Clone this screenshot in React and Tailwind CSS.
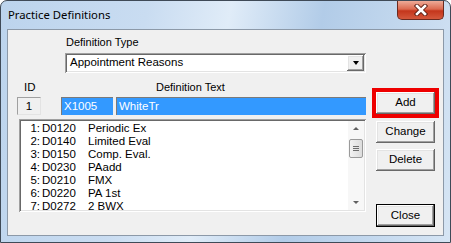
const ROWS = [
  ["1:", "D0120", "Periodic Ex"],
  ["2:", "D0140", "Limited Eval"],
  ["3:", "D0150", "Comp. Eval."],
  ["4:", "D0230", "PAadd"],
  ["5:", "D0210", "FMX"],
  ["6:", "D0220", "PA 1st"],
  ["7:", "D0272", "2 BWX"],
];

const sunken =
  "shadow-[inset_1px_1px_#a0a0a0,inset_-1px_-1px_#ffffff,inset_2px_2px_#696969,inset_-2px_-2px_#e3e3e3]";
const raised =
  "shadow-[inset_-1px_-1px_#696969,inset_1px_1px_#ffffff,inset_-2px_-2px_#a0a0a0,inset_2px_2px_#e3e3e3]";

function Btn({ children, className = "" }) {
  return (
    <div
      className={`flex w-[59px] items-center justify-center bg-[#f0f0f0] text-[11.5px] text-black ${raised} ${className}`}
    >
      {children}
    </div>
  );
}

function CloseX() {
  return (
    <svg width="16" height="12" viewBox="0 0 16 12">
      <path d="M4 2 L12 10 M12 2 L4 10" stroke="#5a1d12" strokeWidth="4.4" strokeLinecap="square" />
      <path d="M4 2 L12 10 M12 2 L4 10" stroke="#ffffff" strokeWidth="2.6" strokeLinecap="square" />
    </svg>
  );
}

export default function App() {
  return (
    <div
      className="flex h-[243px] w-[451px] flex-col overflow-hidden rounded-t-[7px] border border-[#3f4a57] bg-[linear-gradient(100deg,#bcd4ed_0%,#c9dcf1_30%,#e0ecf8_47%,#b2cce8_66%,#c6daef_86%,#d6e5f4_100%)]"
      style={{ fontFamily: '"Liberation Sans", Arial, sans-serif' }}
    >
      {/* title bar */}
      <div className="flex h-[28px] shrink-0 items-start">
        <div
          className="ml-[7px] mt-[6px] text-[11.3px] leading-[16px] text-black"
          style={{ fontFamily: '"Noto Sans", "Open Sans", sans-serif' }}
        >
          Practice Definitions
        </div>
        <div className="ml-auto mr-[6px] flex h-[19px] w-[47px] items-center justify-center rounded-b-[5px] border border-t-0 border-[#6b2a1f] bg-[linear-gradient(180deg,#eeab98_0%,#dc6a50_45%,#c4361c_55%,#d4583c_100%)]">
          <CloseX />
        </div>
      </div>

      {/* client area */}
      <div className="mx-[6px] mb-[6px] flex flex-1 border border-[#8c99a8] bg-[#f0f0f0] text-[11px] text-black">
        {/* left column */}
        <div className="flex w-[359px] flex-col">
          <div className="ml-[58px] mt-[6px] h-[13px] leading-[13px]">Definition Type</div>
          <div className={`ml-[57px] mt-[4px] flex h-[20px] w-[301px] items-center bg-white ${sunken}`}>
            <div className="flex-1 pl-[5px] text-[11.5px]">Appointment Reasons</div>
            <div className={`mr-[2px] flex h-[16px] w-[17px] items-center justify-center bg-[#f0f0f0] ${raised}`}>
              <div className="h-0 w-0 border-x-[3.5px] border-t-[4px] border-x-transparent border-t-black" />
            </div>
          </div>

          <div className="mt-[8px] flex h-[13px] leading-[13px]">
            <div className="ml-[16px] w-[20px] text-[11.5px]">ID</div>
            <div className="ml-[112px]">Definition Text</div>
          </div>

          <div className="mt-[3px] flex h-[18px] text-[11.5px] leading-[18px]">
            <div className="ml-[9px] w-[24px] border border-[#a0a0a0] border-b-[#e3e3e3] border-r-[#e3e3e3] bg-[#f0f0f0] text-center leading-[16px]">
              1
            </div>
            <div className="ml-[20px] w-[52px] border-l border-t border-[#7a7a7a] bg-[#3399ff] pl-[2px] leading-[17px] text-white">
              X1005
            </div>
            <div className="ml-[3px] w-[250px] border-l border-t border-[#7a7a7a] bg-[#3399ff] pl-[2px] leading-[17px] text-white">
              WhiteTr
            </div>
          </div>

          <div className={`ml-[11px] mt-[4px] flex h-[93px] w-[347px] bg-white p-[2px] ${sunken}`}>
            <div className="flex-1 pt-[1px] text-[11.5px]">
              {ROWS.map(([n, code, desc]) => (
                <div key={n} className="flex h-[13px] leading-[13px]">
                  <span className="ml-[8px] w-[11px] text-right">{n}</span>
                  <span className="ml-[2px] w-[46px]">{code}</span>
                  <span>{desc}</span>
                </div>
              ))}
            </div>
            <div className="flex w-[16px] flex-col items-center bg-[#f7f7f7]">
              <div className="mt-[6px] h-0 w-0 border-x-[3px] border-b-[3px] border-x-transparent border-b-[#606060]" />
              <div className="mt-[9px] flex h-[19px] w-[14px] flex-col items-center justify-center gap-[1px] rounded-[2px] border border-[#9a9a9a] bg-[linear-gradient(90deg,#f2f2f2,#dcdcdc)]">
                <div className="h-px w-[6px] bg-[#6d6d6d]" />
                <div className="h-px w-[6px] bg-[#6d6d6d]" />
                <div className="h-px w-[6px] bg-[#6d6d6d]" />
              </div>
              <div className="mt-auto mb-[6px] h-0 w-0 border-x-[3px] border-t-[3px] border-x-transparent border-t-[#606060]" />
            </div>
          </div>
        </div>

        {/* right column */}
        <div className="flex flex-col">
          <div className="ml-[5px] mt-[58px] h-[30px] w-[67px] border-[4px] border-[#ee0000]">
            <Btn className="h-[22px]">Add</Btn>
          </div>
          <Btn className="ml-[9px] mt-[3px] h-[22px]">Change</Btn>
          <Btn className="ml-[9px] mt-[6px] h-[22px]">Delete</Btn>
          <Btn className="ml-[9px] mt-[33px] h-[23px] border border-black">Close</Btn>
        </div>
      </div>
    </div>
  );
}
